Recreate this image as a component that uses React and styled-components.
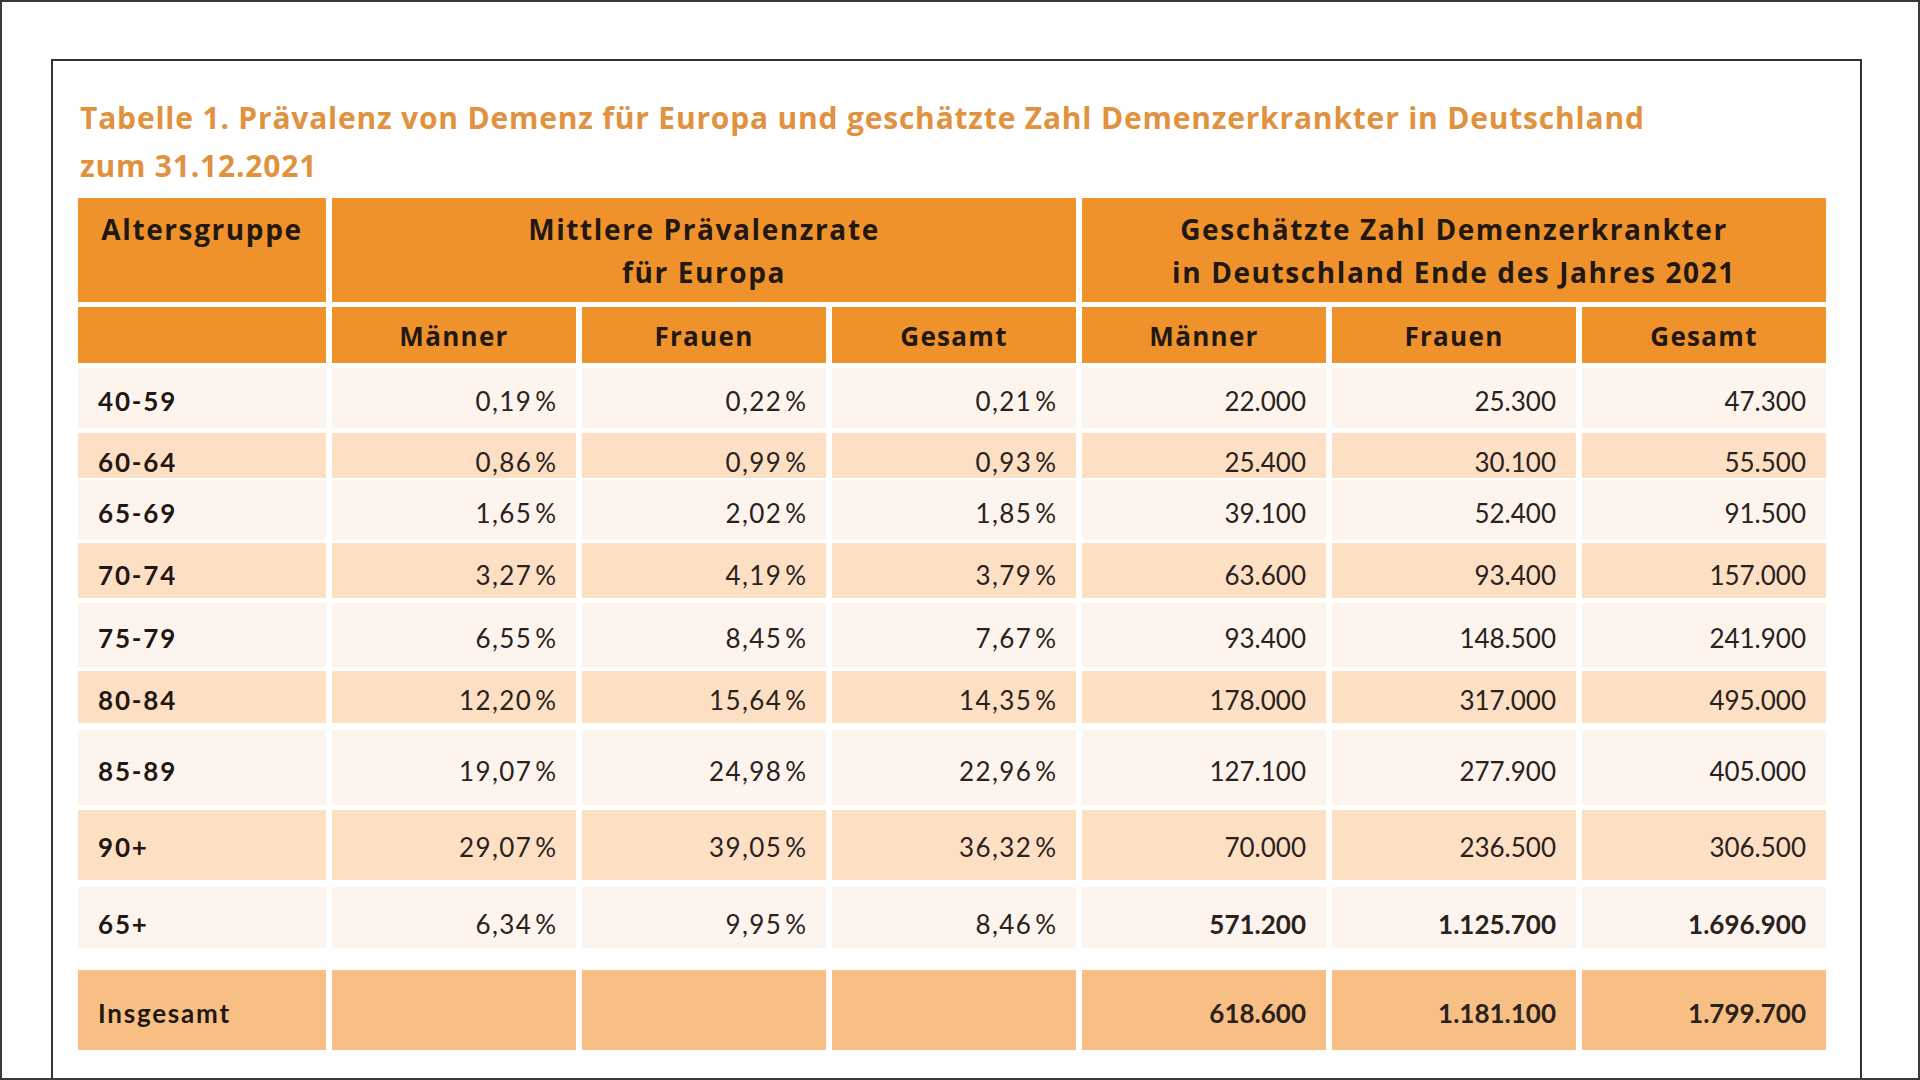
import React from "react";
import styled, { createGlobalStyle } from "styled-components";

const GlobalStyle = createGlobalStyle`
  html, body {
    margin: 0;
    padding: 0;
    background: #ffffff;
  }
  body {
    font-family: "Lato", "Open Sans", sans-serif;
  }
`;

const COLS = "248px repeat(6, 244px)";
const HEAD_FONT = `"Open Sans", "Lato", sans-serif`;

const ageRows = [
  { label: "40-59", tone: "light", gap: 5, height: 60, pt: 18, rate: ["0,19", "0,22", "0,21"], count: ["22.000", "25.300", "47.300"] },
  { label: "60-64", tone: "dark", gap: 5, height: 45, pt: 14, rate: ["0,86", "0,99", "0,93"], count: ["25.400", "30.100", "55.500"] },
  { label: "65-69", tone: "light", gap: 2, height: 60, pt: 18, rate: ["1,65", "2,02", "1,85"], count: ["39.100", "52.400", "91.500"] },
  { label: "70-74", tone: "dark", gap: 3, height: 55, pt: 17, rate: ["3,27", "4,19", "3,79"], count: ["63.600", "93.400", "157.000"] },
  { label: "75-79", tone: "light", gap: 5, height: 64, pt: 20, rate: ["6,55", "8,45", "7,67"], count: ["93.400", "148.500", "241.900"] },
  { label: "80-84", tone: "dark", gap: 4, height: 52, pt: 14, rate: ["12,20", "15,64", "14,35"], count: ["178.000", "317.000", "495.000"] },
  { label: "85-89", tone: "light", gap: 7, height: 75, pt: 26, rate: ["19,07", "24,98", "22,96"], count: ["127.100", "277.900", "405.000"] },
  { label: "90+", tone: "dark", gap: 5, height: 70, pt: 22, rate: ["29,07", "39,05", "36,32"], count: ["70.000", "236.500", "306.500"] },
  { label: "65+", tone: "light", gap: 7, height: 61, pt: 22, rate: ["6,34", "9,95", "8,46"], count: ["571.200", "1.125.700", "1.696.900"], boldCount: true },
  { label: "Insgesamt", tone: "total", gap: 22, height: 80, pt: 28, rate: ["", "", ""], count: ["618.600", "1.181.100", "1.799.700"], boldCount: true },
];

const toneColor = {
  head: "#f0922b",
  light: "#fdf4ee",
  dark: "#fddfc4",
  total: "#f8bf84",
};

const Screen = styled.div`
  width: 1920px;
  height: 1080px;
  box-sizing: border-box;
  border: 2px solid #3a3a3a;
  overflow: hidden;
  padding: 57px 0 0 49px;
`;

const Panel = styled.div`
  box-sizing: border-box;
  width: 1811px;
  height: 1030px;
  border: 2px solid #333333;
  border-bottom: none;
  padding: 33px 0 0 25px;
  background: #ffffff;
`;

const Title = styled.h1`
  margin: 0 0 8px 2px;
  font-family: ${HEAD_FONT};
  font-size: 30px;
  line-height: 48px;
  font-weight: 700;
  letter-spacing: 0.8px;
  color: #e0923f;
`;

const Row = styled.div`
  display: grid;
  grid-template-columns: ${COLS};
  column-gap: 6px;
  height: ${(p) => p.$height}px;
  margin-top: ${(p) => p.$gap || 0}px;
`;

const HeadCell = styled.div`
  grid-column: span ${(p) => p.$span || 1};
  background: ${toneColor.head};
  color: #221812;
  font-family: ${HEAD_FONT};
  font-size: ${(p) => (p.$small ? 26 : 28)}px;
  font-weight: 700;
  line-height: 43px;
  letter-spacing: ${(p) => (p.$small ? 1.3 : 1.6)}px;
  text-align: center;
  padding-top: ${(p) => p.$pt}px;
`;

const Cell = styled.div`
  background: ${(p) => toneColor[p.$tone]};
  color: #2a221d;
  font-size: 26px;
  line-height: 30px;
  padding-top: ${(p) => p.$pt}px;
  padding-right: 20px;
  text-align: right;
  white-space: nowrap;
  font-weight: ${(p) => (p.$bold ? 700 : 400)};
  letter-spacing: ${(p) => (p.$rate ? 1.4 : 0)}px;
`;

const Percent = styled.span`
  margin-left: 3px;
  letter-spacing: 0;
`;

const LabelCell = styled(Cell)`
  text-align: left;
  padding-left: 20px;
  padding-right: 0;
  font-weight: 700;
  letter-spacing: 1.8px;
  color: #1f1813;
`;

export default function App() {
  return (
    <>
      <GlobalStyle />
      <Screen>
        <Panel>
          <Title>
            Tabelle 1. Prävalenz von Demenz für Europa und geschätzte Zahl Demenzerkrankter in Deutschland
            <br />
            zum 31.12.2021
          </Title>
          <Row $height={104}>
            <HeadCell $pt={10}>Altersgruppe</HeadCell>
            <HeadCell $span={3} $pt={10}>
              Mittlere Prävalenzrate
              <br />
              für Europa
            </HeadCell>
            <HeadCell $span={3} $pt={10}>
              Geschätzte Zahl Demenzerkrankter
              <br />
              in Deutschland Ende des Jahres 2021
            </HeadCell>
          </Row>
          <Row $height={56} $gap={5}>
            <HeadCell $pt={8} $small />
            {["Männer", "Frauen", "Gesamt", "Männer", "Frauen", "Gesamt"].map((h, i) => (
              <HeadCell key={i} $pt={8} $small>{h}</HeadCell>
            ))}
          </Row>
          {ageRows.map((r) => (
            <Row key={r.label} $height={r.height} $gap={r.gap}>
              <LabelCell $tone={r.tone} $pt={r.pt}>{r.label}</LabelCell>
              {r.rate.map((v, i) => (
                <Cell key={"r" + i} $tone={r.tone} $pt={r.pt} $rate>
                  {v && (
                    <>
                      {v}
                      <Percent>%</Percent>
                    </>
                  )}
                </Cell>
              ))}
              {r.count.map((v, i) => (
                <Cell key={"c" + i} $tone={r.tone} $pt={r.pt} $bold={r.boldCount}>
                  {v}
                </Cell>
              ))}
            </Row>
          ))}
        </Panel>
      </Screen>
    </>
  );
}
